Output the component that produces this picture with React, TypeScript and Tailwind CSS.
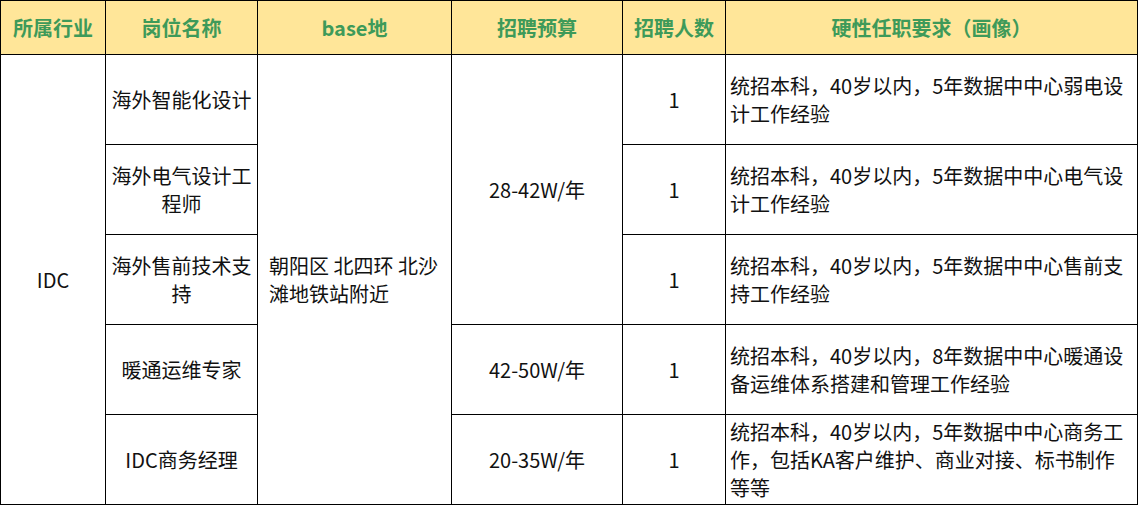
import React from "react";

const font = { fontFamily: '"Microsoft YaHei", "Noto Sans CJK SC", "Noto Sans", sans-serif' };

const th = "border border-black bg-[#ffe699] text-[#3e9a59] font-bold text-[20px] text-center align-middle p-0";
const td = "border border-black text-[#111] text-[20px] leading-[28px] align-middle text-center p-0";
const tdReq = "border border-black text-[#111] text-[20px] leading-[28px] align-middle text-left pl-[4px] pr-0 whitespace-nowrap";

export default function App() {
  return (
    <div className="w-[1138px] h-[505px] bg-white" style={font}>
      <table className="border-collapse table-fixed w-[1137px]">
        <colgroup>
          <col className="w-[105px]" />
          <col className="w-[152px]" />
          <col className="w-[194px]" />
          <col className="w-[171px]" />
          <col className="w-[103px]" />
          <col className="w-[412px]" />
        </colgroup>
        <thead>
          <tr className="h-[54px]">
            <th className={th}>所属行业</th>
            <th className={th}>岗位名称</th>
            <th className={th}>base地</th>
            <th className={th}>招聘预算</th>
            <th className={th}>招聘人数</th>
            <th className={th}>硬性任职要求（画像）</th>
          </tr>
        </thead>
        <tbody>
          <tr className="h-[90px]">
            <td className={td} rowSpan={5}>IDC</td>
            <td className={td + " whitespace-nowrap"}>海外智能化设计</td>
            <td className={td + " !text-left pl-[11px] whitespace-nowrap"} rowSpan={5}>
              朝阳区 北四环 北沙<br />滩地铁站附近
            </td>
            <td className={td} rowSpan={3}>28-42W/年</td>
            <td className={td}>1</td>
            <td className={tdReq}>
              统招本科，40岁以内，5年数据中中心弱电设<br />计工作经验
            </td>
          </tr>
          <tr className="h-[90px]">
            <td className={td + " whitespace-nowrap"}>海外电气设计工<br />程师</td>
            <td className={td}>1</td>
            <td className={tdReq}>
              统招本科，40岁以内，5年数据中中心电气设<br />计工作经验
            </td>
          </tr>
          <tr className="h-[90px]">
            <td className={td + " whitespace-nowrap"}>海外售前技术支<br />持</td>
            <td className={td}>1</td>
            <td className={tdReq}>
              统招本科，40岁以内，5年数据中中心售前支<br />持工作经验
            </td>
          </tr>
          <tr className="h-[90px]">
            <td className={td}>暖通运维专家</td>
            <td className={td}>42-50W/年</td>
            <td className={td}>1</td>
            <td className={tdReq}>
              统招本科，40岁以内，8年数据中中心暖通设<br />备运维体系搭建和管理工作经验
            </td>
          </tr>
          <tr className="h-[90px]">
            <td className={td}>IDC商务经理</td>
            <td className={td}>20-35W/年</td>
            <td className={td}>1</td>
            <td className={tdReq}>
              统招本科，40岁以内，5年数据中中心商务工<br />作，包括KA客户维护、商业对接、标书制作<br />等等
            </td>
          </tr>
        </tbody>
      </table>
    </div>
  );
}
